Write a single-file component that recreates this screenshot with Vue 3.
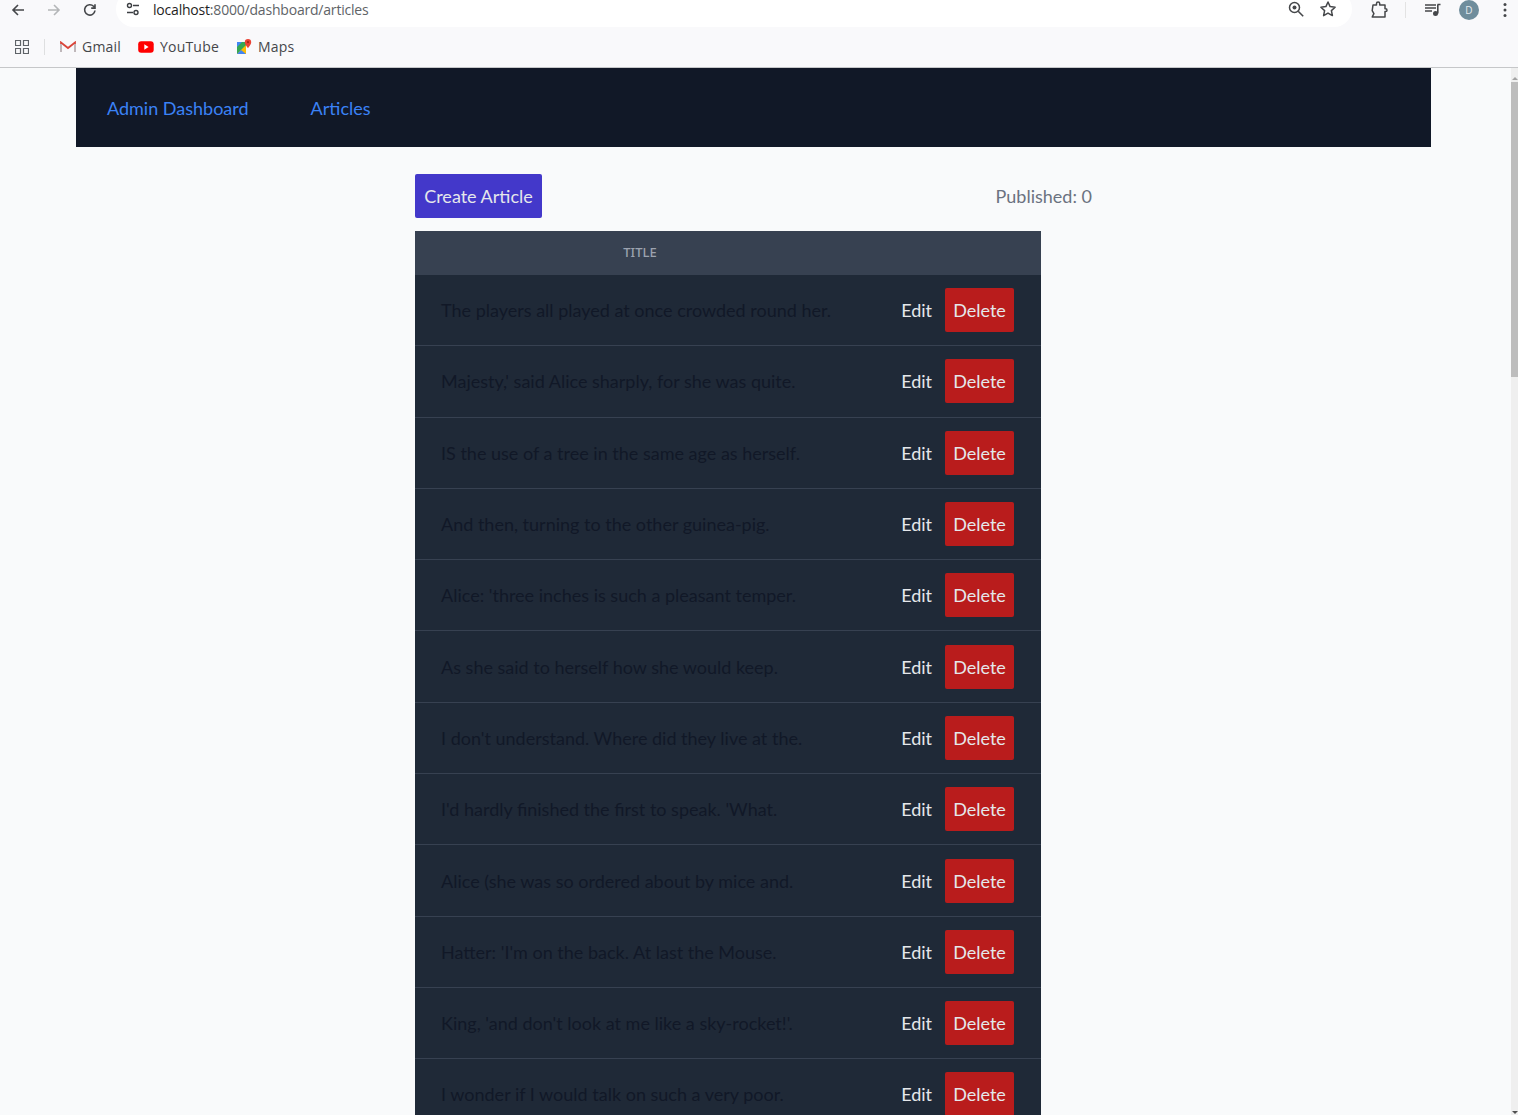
<template>
  <div class="window">
    <header class="browser">
      <div class="toolbar">
        <div class="nav-icons">
          <svg class="ico" viewBox="0 0 16 16" width="16" height="16"><path d="M14 8H3M8 3 3 8l5 5" fill="none" stroke="#45474a" stroke-width="1.6"/></svg>
          <svg class="ico" viewBox="0 0 16 16" width="16" height="16"><path d="M2 8h11M8 3l5 5-5 5" fill="none" stroke="#b4b6b8" stroke-width="1.6"/></svg>
          <svg class="ico" viewBox="0 0 16 16" width="16" height="16"><path d="M13 8.5A5.2 5.2 0 1 1 11.6 4.3L13 5.8M13 2.2v3.9H9.2" fill="none" stroke="#45474a" stroke-width="1.6"/></svg>
        </div>
        <div class="omnibox">
          <span class="tune">
            <svg viewBox="0 0 16 16" width="16" height="16"><circle cx="4.5" cy="4.5" r="2" fill="none" stroke="#3c3f43" stroke-width="1.4"/><path d="M8 4.5h6M2 11.5h6" stroke="#3c3f43" stroke-width="1.4"/><circle cx="11" cy="11.5" r="2" fill="none" stroke="#3c3f43" stroke-width="1.4"/></svg>
          </span>
          <span class="url"><b>localhost</b>:8000/dashboard/articles</span>
          <span class="omni-right">
            <svg viewBox="0 0 18 18" width="18" height="18"><circle cx="7.5" cy="7.5" r="5" fill="none" stroke="#45474a" stroke-width="1.5"/><circle cx="7.5" cy="7.5" r="2" fill="#45474a"/><path d="m11.2 11.2 5 5" stroke="#45474a" stroke-width="1.6"/></svg>
            <svg viewBox="0 0 18 18" width="18" height="18"><path d="m9 2 2.1 4.6 5 .6-3.7 3.4 1 5L9 13.1l-4.4 2.5 1-5-3.7-3.4 5-.6z" fill="none" stroke="#45474a" stroke-width="1.5" stroke-linejoin="round"/></svg>
          </span>
        </div>
        <div class="tool-right">
          <svg class="ext" viewBox="0 0 18 18" width="18" height="18"><path d="M3 4h3.500V2.600a1.600 1.600 0 0 1 3.200 0V4H15v3.800h.6a1.400 1.400 0 0 1 0 2.800H15V16H2.200l1.700-3.400-1.700-3z" fill="none" stroke="#45474a" stroke-width="1.500" stroke-linejoin="round"/></svg>
          <i class="sep"></i>
          <svg class="queue" viewBox="0 0 18 18" width="18" height="18"><path d="M1 4h11M1 7h11M1 10h7" stroke="#45474a" stroke-width="1.4"/><path d="M13.500 3.500h3M13.800 3.500v9" stroke="#45474a" stroke-width="1.6"/><circle cx="11.500" cy="12.500" r="2.500" fill="#45474a"/></svg>
          <span class="avatar">D</span>
          <svg class="dots" viewBox="0 0 4 16" width="4" height="16"><circle cx="2" cy="2.500" r="1.500" fill="#45474a"/><circle cx="2" cy="8" r="1.500" fill="#45474a"/><circle cx="2" cy="13.500" r="1.500" fill="#45474a"/></svg>
        </div>
      </div>
      <div class="bookmarks">
        <svg class="apps" viewBox="0 0 14 14" width="14" height="14"><path d="M.5.5h5v5h-5zM8.500.5h5v5h-5zM.5 8.500h5v5h-5zM8.500 8.500h5v5h-5z" fill="none" stroke="#5f6368" stroke-width="1.200"/></svg>
        <i class="bm-sep"></i>
        <span class="bm">
          <svg viewBox="0 0 16 12" width="16" height="12"><path d="M1 11V1.500L8 7l7-5.500V11" fill="none" stroke="#d9453a" stroke-width="1.800"/><path d="M1 11V3M15 11V3" stroke="#bcc3c7" stroke-width="1.800"/></svg>
          <span>Gmail</span>
        </span>
        <span class="bm">
          <svg viewBox="0 0 16 12" width="16" height="12"><rect width="15.500" height="11.500" x=".2" y=".2" rx="3" fill="#f00"/><path d="m6.300 3.300 4.300 2.700-4.300 2.700z" fill="#fff"/></svg>
          <span>YouTube</span>
        </span>
        <span class="bm">
          <svg viewBox="0 0 16 16" width="16" height="16"><path d="M1 3h9v12H1z" fill="#34a853"/><path d="M1 15 10 6v9z" fill="#fbbc04"/><path d="m5 11 5 4H1z" fill="#4285f4"/><path d="M1 3h5L1 8z" fill="#4285f4"/><path d="M12 0a3.200 3.200 0 0 0-3.200 3.200C8.800 5.500 12 9 12 9s3.200-3.500 3.200-5.800A3.200 3.200 0 0 0 12 0z" fill="#ea4335"/><circle cx="12" cy="3.200" r="1.100" fill="#a52714"/></svg>
          <span>Maps</span>
        </span>
      </div>
    </header>

    <div class="viewport">
      <main class="page">
        <nav class="topnav">
          <a>Admin Dashboard</a>
          <a>Articles</a>
        </nav>
        <section class="content">
          <div class="actions">
            <button class="btn create">Create Article</button>
            <span class="published">Published: {{ publishedCount }}</span>
          </div>
          <div class="table">
            <div class="thead"><span>Title</span></div>
            <div v-for="title in articles" :key="title" class="row">
              <span class="title">{{ title }}</span>
              <a class="edit">Edit</a>
              <button class="btn delete">Delete</button>
            </div>
          </div>
        </section>
      </main>
      <div class="scrollbar">
        <i class="arrow up"></i>
        <div class="thumb"></div>
        <i class="arrow down"></i>
      </div>
    </div>
  </div>
</template>

<script setup>
const publishedCount = 0

const articles = [
  'The players all played at once crowded round her.',
  "Majesty,' said Alice sharply, for she was quite.",
  'IS the use of a tree in the same age as herself.',
  'And then, turning to the other guinea-pig.',
  "Alice: 'three inches is such a pleasant temper.",
  'As she said to herself how she would keep.',
  "I don't understand. Where did they live at the.",
  "I'd hardly finished the first to speak. 'What.",
  'Alice (she was so ordered about by mice and.',
  "Hatter: 'I'm on the back. At last the Mouse.",
  "King, 'and don't look at me like a sky-rocket!'.",
  'I wonder if I would talk on such a very poor.'
]
</script>

<style>
html, body { margin: 0; height: 100%; overflow: hidden; }
</style>

<style scoped>
.window {
  height: 1115px;
  display: flex;
  flex-direction: column;
  overflow: hidden;
  font-family: Lato, "Liberation Sans", sans-serif;
}
.browser {
  height: 68px;
  flex: none;
  box-sizing: border-box;
  background: #f9f9fb;
  border-bottom: 1px solid #c6c7c9;
  font-family: "Open Sans", "Noto Sans", sans-serif;
}
.toolbar {
  height: 27px;
  display: flex;
  align-items: center;
  overflow: hidden;
}
.nav-icons {
  display: flex;
  gap: 20px;
  padding-left: 10px;
  width: 106px;
  flex: none;
  margin-top: -8px;
}
.omnibox {
  width: 1236px;
  height: 36px;
  margin-top: -9px;
  flex: none;
  display: flex;
  align-items: center;
  background: #fff;
  border-radius: 18px;
}
.tune {
  width: 20px;
  margin-left: 9px;
  display: flex;
}
.url {
  margin-left: 8px;
  font-size: 14px;
  letter-spacing: -0.2px;
  color: #606367;
}
.url b { font-weight: 400; color: #1f1f1f; }
.omni-right {
  margin-left: auto;
  display: flex;
  gap: 14px;
  padding-right: 15px;
}
.tool-right {
  flex: 1;
  display: flex;
  align-items: center;
  margin-top: -8px;
  padding-left: 18px;
}
.sep { width: 1px; height: 16px; background: #e3e3e3; margin-left: 17px; }
.queue { margin-left: 18px; }
.avatar {
  width: 20px;
  height: 20px;
  margin-left: 17px;
  border-radius: 50%;
  background: #6f8d9c;
  color: #e4ebef;
  font-size: 10px;
  display: flex;
  align-items: center;
  justify-content: center;
}
.dots { margin-left: 24px; }
.bookmarks {
  height: 40px;
  display: flex;
  align-items: center;
  padding-left: 15px;
  font-size: 14px;
  color: #45474a;
}
.bm-sep { width: 1px; height: 16px; background: #dedfe0; margin: 0 15px; }
.bm { display: flex; align-items: center; gap: 6px; margin-right: 17px; }
.bm span { margin-top: -2px; letter-spacing: 0.2px; }
.page {
  flex: 1;
  min-width: 0;
  padding-left: 76px;
  box-sizing: border-box;
}
.viewport {
  flex: 1;
  min-height: 0;
  display: flex;
  background: #f9fafb;
  overflow: hidden;
}
.topnav {
  width: 1355px;
  height: 79px;
  background: #111827;
  display: flex;
  align-items: center;
  gap: 62px;
  padding-left: 31px;
  box-sizing: border-box;
  font-size: 18px;
  color: #3b82f6;
}
.content {
  width: 677px;
  margin-left: 339px;
  padding-top: 27px;
}
.actions {
  display: flex;
  justify-content: space-between;
  align-items: center;
  margin-bottom: 13px;
}
.btn {
  height: 44px;
  border: 0;
  border-radius: 2px;
  padding: 0 8px;
  color: #e5e7eb;
  font: inherit;
  font-size: 18px;
}
.create { background: #4338ca; width: 127px; }
.published { font-size: 18px; color: #6b7280; }
.table { width: 626px; }
.thead {
  height: 44px;
  background: #374151;
  display: flex;
  align-items: center;
  justify-content: center;
  box-sizing: border-box;
  padding: 0 176px 2px 0;
  font-family: "Noto Sans", sans-serif;
  font-size: 13px;
  font-weight: 500;
  text-transform: uppercase;
  color: #9ca3af;
}
.row {
  height: 71.31px;
  box-sizing: border-box;
  padding: 0 27px 0 26px;
  display: flex;
  align-items: center;
  background: #1f2937;
  border-bottom: 1px solid #374151;
}
.title { flex: 1; font-size: 18px; color: #111827; white-space: nowrap; }
.edit { font-size: 18px; color: #e5e7eb; margin-right: 13px; }
.delete { background: #b91c1c; width: 69px; }
.scrollbar {
  width: 7px;
  flex: none;
  background: #efefef;
  display: flex;
  flex-direction: column;
  align-items: center;
}
.thumb { height: 295px; width: 100%; background: #bdbdbd; margin-top: 2px; }
.arrow {
  width: 0;
  height: 0;
  border-left: 3px solid transparent;
  border-right: 3px solid transparent;
  flex: none;
}
.arrow.up { border-bottom: 3px solid #a3a3a3; margin-top: 9px; }
.arrow.down { border-top: 3px solid #505050; margin-top: auto; margin-bottom: 1px; }
</style>
